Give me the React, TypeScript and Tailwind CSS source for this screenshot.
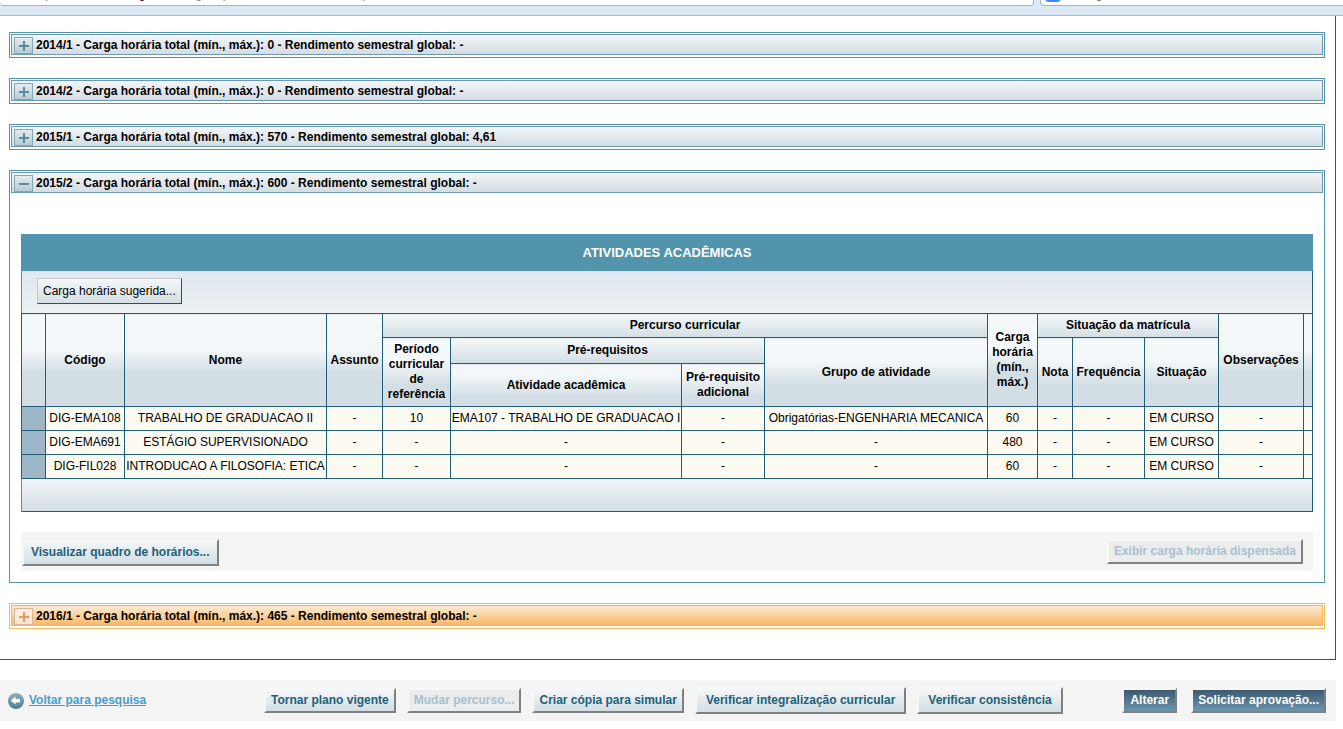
import { useState, type ReactNode } from 'react';

interface Activity {
  code: string;
  name: string;
  period: string;
  prerequisite: string;
  group: string;
  hours: string;
}

const activities: Activity[] = [
  {
    code: 'DIG-EMA108',
    name: 'TRABALHO DE GRADUACAO II',
    period: '10',
    prerequisite: 'EMA107 - TRABALHO DE GRADUACAO I',
    group: 'Obrigatórias-ENGENHARIA MECANICA',
    hours: '60',
  },
  { code: 'DIG-EMA691', name: 'ESTÁGIO SUPERVISIONADO', period: '-', prerequisite: '-', group: '-', hours: '480' },
  { code: 'DIG-FIL028', name: 'INTRODUCAO A FILOSOFIA: ETICA', period: '-', prerequisite: '-', group: '-', hours: '60' },
];

function ToggleIcon({ open, highlight }: { open: boolean; highlight: boolean }) {
  return (
    <svg
      viewBox="0 0 17 15"
      className={`h-[17px] w-[19px] shrink-0 border ${
        highlight
          ? 'border-[#e0b49a] bg-linear-to-b from-[#fff0e4] to-[#fbe3d0] text-[#e09a62]'
          : 'border-[#7fa9b8] bg-linear-to-b from-[#e6edf0] to-[#b6ccd4] text-[#5a8c9b]'
      }`}
      shapeRendering="crispEdges"
    >
      <rect x="4" y="7" width="10" height="2" fill="currentColor" />
      {!open && <rect x="8" y="3" width="2" height="10" fill="currentColor" />}
    </svg>
  );
}

interface SemesterPanelProps {
  title: string;
  defaultOpen?: boolean;
  highlight?: boolean;
  children?: ReactNode;
}

function SemesterPanel({ title, defaultOpen = false, highlight = false, children }: SemesterPanelProps) {
  const [open, setOpen] = useState(defaultOpen);

  return (
    <section className={`border px-px pt-px pb-[2px] ${highlight ? 'border-[#f5b75c]' : 'border-[#5294ab]'}`}>
      <button
        type="button"
        aria-expanded={open}
        onClick={() => setOpen(!open)}
        className={`flex h-[21px] w-full items-end gap-[3px] border pl-[2px] text-left font-bold ${
          highlight
            ? 'border-[#f5b75c] bg-linear-to-b from-[#fdebd0] to-[#f9b765]'
            : 'border-[#6f99b3] bg-linear-to-b from-[#f3f6f9] to-[#d3dde2]'
        }`}
      >
        <ToggleIcon open={open} highlight={highlight} />
        <span className="h-[17px] leading-[17px]">{title}</span>
      </button>
      {open && children}
    </section>
  );
}

interface ActionButtonProps {
  children: ReactNode;
  variant?: 'light' | 'dark';
  size?: 'small' | 'medium' | 'large';
  disabled?: boolean;
}

const buttonSizes = {
  small: 'h-[25px] px-[5px]',
  medium: 'h-[27px] px-[7px]',
  large: 'h-[27px] px-[9px]',
};

function ActionButton({ children, variant = 'light', size = 'small', disabled = false }: ActionButtonProps) {
  const look = disabled
    ? 'bg-[#ebecee] text-[#a9c0cd]'
    : variant === 'dark'
      ? 'bg-linear-to-b from-[#3c5a70] to-[#6c95ae] text-white'
      : 'bg-linear-to-b from-[#f4f7fa] to-[#d2dee3] text-[#1f6078]';

  return (
    <button
      type="button"
      disabled={disabled}
      className={`min-w-[55px] shrink-0 border-2 border-t-[#f7f7f7] border-r-[#808080] border-b-[#808080] border-l-[#f7f7f7] font-bold whitespace-nowrap ${buttonSizes[size]} ${look}`}
    >
      {children}
    </button>
  );
}

const headCell =
  'border border-[#1f6078] px-[3px] bg-[linear-gradient(to_bottom,#f4f8fa_calc(50%-12px),#d3dee4_calc(50%+12px))]';
const bodyCell = 'border border-[#1f6078] whitespace-nowrap';

function ActivitiesTable() {
  return (
    <div>
      <h2 className="flex h-[37px] items-center justify-center bg-[#5294ab] text-[13px] font-bold text-white">
        ATIVIDADES ACADÊMICAS
      </h2>
      <div className="flex h-[42px] items-start border-r border-l border-r-[#1f6078] border-l-[#5294ab] bg-linear-to-b from-[#e0e7ee] to-[#edf1f3] px-[15px] pt-[7px]">
        <button
          type="button"
          className="h-[26px] border border-t-[#c8c8c8] border-r-[#48484c] border-b-[#48484c] border-l-[#c8c8c8] bg-linear-to-b from-[#f4f7fa] to-[#d5dfe4] px-[5px]"
        >
          Carga horária sugerida...
        </button>
      </div>
      <table className="w-full table-fixed border-collapse text-center leading-[15px]">
        <colgroup>
          <col className="w-[24px]" />
          <col className="w-[79px]" />
          <col className="w-[202px]" />
          <col className="w-[56px]" />
          <col className="w-[68px]" />
          <col className="w-[231px]" />
          <col className="w-[83px]" />
          <col className="w-[223px]" />
          <col className="w-[50px]" />
          <col className="w-[35px]" />
          <col className="w-[72px]" />
          <col className="w-[74px]" />
          <col className="w-[85px]" />
          <col className="w-[9px]" />
        </colgroup>
        <thead>
          <tr className="h-[24px]">
            <th rowSpan={3} className={headCell} />
            <th rowSpan={3} className={headCell}>Código</th>
            <th rowSpan={3} className={headCell}>Nome</th>
            <th rowSpan={3} className={headCell}>Assunto</th>
            <th colSpan={4} className={headCell}>Percurso curricular</th>
            <th rowSpan={3} className={headCell}>Carga horária (mín., máx.)</th>
            <th colSpan={3} className={headCell}>Situação da matrícula</th>
            <th rowSpan={3} className={headCell}>Observações</th>
            <th rowSpan={3} className={headCell} />
          </tr>
          <tr className="h-[26px]">
            <th rowSpan={2} className={headCell}>Período curricular de referência</th>
            <th colSpan={2} className={headCell}>Pré-requisitos</th>
            <th rowSpan={2} className={headCell}>Grupo de atividade</th>
            <th rowSpan={2} className={headCell}>Nota</th>
            <th rowSpan={2} className={headCell}>Frequência</th>
            <th rowSpan={2} className={headCell}>Situação</th>
          </tr>
          <tr className="h-[43px]">
            <th className={headCell}>Atividade acadêmica</th>
            <th className={headCell}>Pré-requisito adicional</th>
          </tr>
        </thead>
        <tbody>
          {activities.map((a) => (
            <tr key={a.code} className="h-[24px] bg-[#fdfaf2]">
              <td className="border border-[#1f6078] bg-[#9cb6c8]" />
              <td className={bodyCell}>{a.code}</td>
              <td className={bodyCell}>{a.name}</td>
              <td className={bodyCell}>-</td>
              <td className={bodyCell}>{a.period}</td>
              <td className={bodyCell}>{a.prerequisite}</td>
              <td className={bodyCell}>-</td>
              <td className={bodyCell}>{a.group}</td>
              <td className={bodyCell}>{a.hours}</td>
              <td className={bodyCell}>-</td>
              <td className={bodyCell}>-</td>
              <td className={bodyCell}>EM CURSO</td>
              <td className={bodyCell}>-</td>
              <td className={bodyCell} />
            </tr>
          ))}
        </tbody>
      </table>
      <div className="h-[33px] border-r border-b border-l border-[#1f6078] border-l-[#5294ab] bg-linear-to-b from-[#f2f5f8] to-[#d3dee3]" />
    </div>
  );
}

// Only the bottom edge of the address and search boxes shows above the page
function BrowserStrip() {
  return (
    <div className="flex h-4 items-start gap-[6px] border-b border-[#a3b8d0] bg-[#dbe9f7]">
      <div className="flex h-[6px] w-[77%] shrink-0 items-end overflow-hidden rounded-b-sm border-r border-b border-[#a3b3c8] bg-white pb-[3px] pl-8 text-[#808080]">
        <p className="shrink-0 whitespace-nowrap">
          https://sistemas.<span className="text-black">ufmg.br</span>/aluno/grad/plano/historico/semestres/periodo.do
        </p>
      </div>
      <div className="flex h-[6px] flex-1 items-end gap-3 overflow-hidden rounded-bl-sm border-b border-l border-[#a3b3c8] bg-white pb-[3px] pl-1 text-[#606060]">
        <div className="h-4 w-4 shrink-0 rounded-b-sm bg-[#4285f4]" />
        <p className="shrink-0">Google</p>
      </div>
    </div>
  );
}

function BackIcon() {
  return (
    <svg viewBox="0 0 16 16" className="h-4 w-4" aria-hidden="true">
      <defs>
        <linearGradient id="back-fill" x1="0" y1="0" x2="0" y2="1">
          <stop offset="0" stopColor="#8fb0bb" />
          <stop offset="1" stopColor="#4c7f90" />
        </linearGradient>
      </defs>
      <circle cx="8" cy="8" r="8" fill="url(#back-fill)" />
      <path d="M2.5 7.500 7.500 3.500v2.500H12v3.500H7.500V11.500z" fill="#fff" />
    </svg>
  );
}

export default function App() {
  return (
    <div className="bg-white font-['Liberation_Sans',Arial,sans-serif] text-[12px] leading-[15px] text-black">
      <BrowserStrip />

      <main className="mr-[7px] flex flex-col gap-5 border-r border-b border-[#1b6070] pt-4 pr-[10px] pb-[30px] pl-[9px]">
        <SemesterPanel title="2014/1 - Carga horária total (mín., máx.): 0 - Rendimento semestral global: -" />
        <SemesterPanel title="2014/2 - Carga horária total (mín., máx.): 0 - Rendimento semestral global: -" />
        <SemesterPanel title="2015/1 - Carga horária total (mín., máx.): 570 - Rendimento semestral global: 4,61" />
        <SemesterPanel title="2015/2 - Carga horária total (mín., máx.): 600 - Rendimento semestral global: -" defaultOpen>
          <div className="flex flex-col gap-5 px-[10px] pt-[41px] pb-[9px]">
            <ActivitiesTable />
            <div className="flex h-[39px] items-start justify-between bg-[#f4f4f4] pt-[7px] pr-[10px] pl-px">
              <ActionButton size="medium">Visualizar quadro de horários...</ActionButton>
              <ActionButton disabled>Exibir carga horária dispensada</ActionButton>
            </div>
          </div>
        </SemesterPanel>
        <SemesterPanel title="2016/1 - Carga horária total (mín., máx.): 465 - Rendimento semestral global: -" highlight />
      </main>

      <footer className="mt-5 mr-[7px] flex h-[41px] items-center bg-[#f4f4f4] pr-[10px] pl-2">
        <div className="w-[256px] shrink-0">
          <a href="#pesquisa" className="flex w-fit items-start gap-[5px] font-bold text-[#4a9cc9]">
            <BackIcon />
            <span className="underline">Voltar para pesquisa</span>
          </a>
        </div>
        <div className="flex items-center gap-[11px]">
          <ActionButton>Tornar plano vigente</ActionButton>
          <ActionButton disabled>Mudar percurso...</ActionButton>
          <ActionButton>Criar cópia para simular</ActionButton>
          <ActionButton size="large">Verificar integralização curricular</ActionButton>
          <ActionButton size="large">Verificar consistência</ActionButton>
        </div>
        <div className="ml-auto flex items-center gap-[14px]">
          <ActionButton variant="dark">Alterar</ActionButton>
          <ActionButton variant="dark">Solicitar aprovação...</ActionButton>
        </div>
      </footer>
    </div>
  );
}
